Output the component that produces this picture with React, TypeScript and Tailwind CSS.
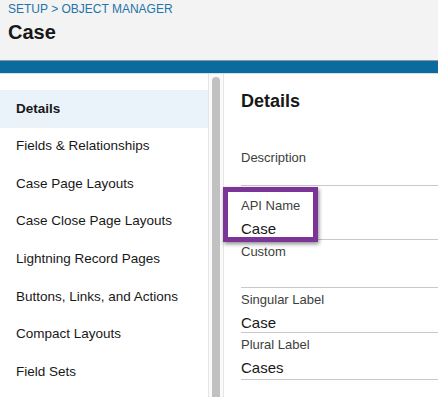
import React from "react";

const navItems = [
  "Details",
  "Fields & Relationships",
  "Case Page Layouts",
  "Case Close Page Layouts",
  "Lightning Record Pages",
  "Buttons, Links, and Actions",
  "Compact Layouts",
  "Field Sets",
];

const fields = [
  { label: "Description", value: "", h: "h-[57px]", pt: "pt-[21px]" },
  { label: "API Name", value: "Case", h: "h-[54px]", pt: "pt-[12px]" },
  { label: "Custom", value: "", h: "h-[48px]", pt: "pt-[4px]" },
  { label: "Singular Label", value: "Case", h: "h-[45px]", pt: "pt-[4px]" },
  { label: "Plural Label", value: "Cases", h: "h-[47px]", pt: "pt-[4px]" },
];

export default function App() {
  return (
    <div
      className="w-[438px] h-[397px] overflow-hidden bg-white flex flex-col text-[#181818]"
      style={{ fontFamily: '"Liberation Sans", Arial, sans-serif' }}
    >
      {/* page header */}
      <div className="h-[60px] shrink-0 bg-[#f3f3f3] px-2 pt-[1px]">
        <div className="text-[12px] text-[#2574a9] leading-[16px]">
          SETUP &gt; OBJECT MANAGER
        </div>
        <div className="text-[20px] font-bold leading-[28px] mt-[1px]">Case</div>
      </div>
      <div className="h-[14px] shrink-0 bg-[#0b6a9e] border-t border-[#8a9aa5] border-b border-b-[#d8dde0]" />

      <div className="flex flex-1 min-h-0">
        {/* left nav */}
        <div className="w-[208px] shrink-0 pt-[16px]">
          {navItems.map((item, i) => (
            <div
              key={item}
              className={
                "h-[37.6px] flex items-center pl-4 text-[13.5px] " +
                (i === 0 ? "bg-[#ebf3fa] font-bold" : "")
              }
            >
              {item}
            </div>
          ))}
        </div>

        {/* scrollbar */}
        <div className="w-[16px] shrink-0 bg-[#fafafa] border-l border-r border-[#e6e6e6] pt-[3px] flex justify-center">
          <div className="w-[8px] h-[400px] rounded-full bg-[#c1c1c1]" />
        </div>

        {/* details panel */}
        <div className="flex-1 relative pl-[17px]">
          <div className="text-[18px] font-bold h-[55px] flex items-center">
            Details
          </div>
          {fields.map((f) => (
            <div
              key={f.label}
              className={"border-b border-[#c9c9c9] " + f.h + " " + f.pt}
            >
              <div className="text-[13px] text-[#3e3e3c] leading-[16px]">{f.label}</div>
              {f.value && (
                <div className="text-[15px] leading-[20px] mt-[5px]">{f.value}</div>
              )}
            </div>
          ))}

          {/* highlight annotation */}
          <div className="absolute left-[-1px] top-[113px] w-[95px] h-[55px] border-[5px] border-[#7b3596] shadow-[1px_2px_4px_rgba(0,0,0,0.45)]" />
        </div>
      </div>
    </div>
  );
}
